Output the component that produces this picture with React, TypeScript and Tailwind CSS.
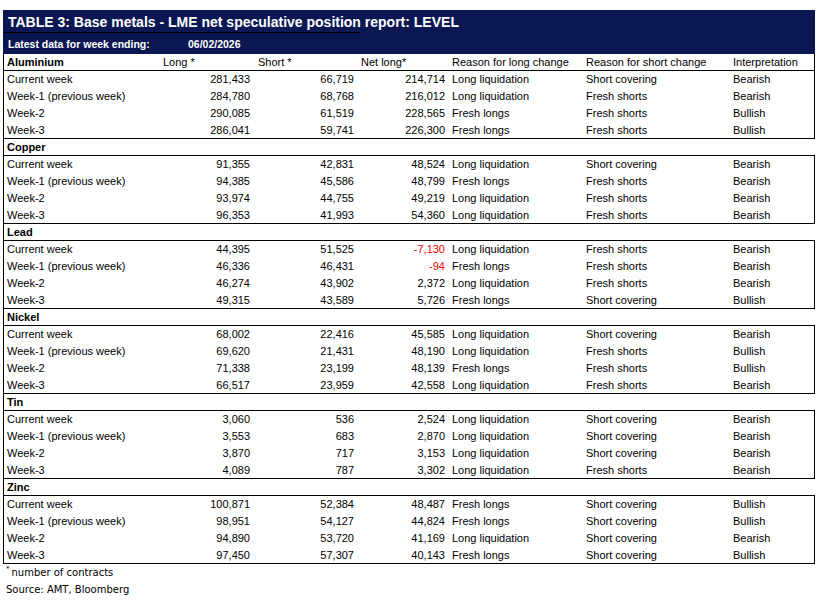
import React from 'react';

type Row = [string, string, string, string, string, string, string];

const sections: { metal: string; rows: Row[] }[] = [
  {
    metal: 'Aluminium',
    rows: [
      ['Current week', '281,433', '66,719', '214,714', 'Long liquidation', 'Short covering', 'Bearish'],
      ['Week-1 (previous week)', '284,780', '68,768', '216,012', 'Long liquidation', 'Fresh shorts', 'Bearish'],
      ['Week-2', '290,085', '61,519', '228,565', 'Fresh longs', 'Fresh shorts', 'Bullish'],
      ['Week-3', '286,041', '59,741', '226,300', 'Fresh longs', 'Fresh shorts', 'Bullish'],
    ],
  },
  {
    metal: 'Copper',
    rows: [
      ['Current week', '91,355', '42,831', '48,524', 'Long liquidation', 'Short covering', 'Bearish'],
      ['Week-1 (previous week)', '94,385', '45,586', '48,799', 'Fresh longs', 'Fresh shorts', 'Bearish'],
      ['Week-2', '93,974', '44,755', '49,219', 'Long liquidation', 'Fresh shorts', 'Bearish'],
      ['Week-3', '96,353', '41,993', '54,360', 'Long liquidation', 'Fresh shorts', 'Bearish'],
    ],
  },
  {
    metal: 'Lead',
    rows: [
      ['Current week', '44,395', '51,525', '-7,130', 'Long liquidation', 'Fresh shorts', 'Bearish'],
      ['Week-1 (previous week)', '46,336', '46,431', '-94', 'Fresh longs', 'Fresh shorts', 'Bearish'],
      ['Week-2', '46,274', '43,902', '2,372', 'Long liquidation', 'Fresh shorts', 'Bearish'],
      ['Week-3', '49,315', '43,589', '5,726', 'Fresh longs', 'Short covering', 'Bullish'],
    ],
  },
  {
    metal: 'Nickel',
    rows: [
      ['Current week', '68,002', '22,416', '45,585', 'Long liquidation', 'Short covering', 'Bearish'],
      ['Week-1 (previous week)', '69,620', '21,431', '48,190', 'Long liquidation', 'Fresh shorts', 'Bullish'],
      ['Week-2', '71,338', '23,199', '48,139', 'Fresh longs', 'Fresh shorts', 'Bullish'],
      ['Week-3', '66,517', '23,959', '42,558', 'Long liquidation', 'Fresh shorts', 'Bearish'],
    ],
  },
  {
    metal: 'Tin',
    rows: [
      ['Current week', '3,060', '536', '2,524', 'Long liquidation', 'Short covering', 'Bearish'],
      ['Week-1 (previous week)', '3,553', '683', '2,870', 'Long liquidation', 'Short covering', 'Bearish'],
      ['Week-2', '3,870', '717', '3,153', 'Long liquidation', 'Short covering', 'Bearish'],
      ['Week-3', '4,089', '787', '3,302', 'Long liquidation', 'Fresh shorts', 'Bearish'],
    ],
  },
  {
    metal: 'Zinc',
    rows: [
      ['Current week', '100,871', '52,384', '48,487', 'Fresh longs', 'Short covering', 'Bullish'],
      ['Week-1 (previous week)', '98,951', '54,127', '44,824', 'Fresh longs', 'Short covering', 'Bullish'],
      ['Week-2', '94,890', '53,720', '41,169', 'Long liquidation', 'Short covering', 'Bearish'],
      ['Week-3', '97,450', '57,307', '40,143', 'Fresh longs', 'Short covering', 'Bullish'],
    ],
  },
];

const cols = 'grid grid-cols-[146px_103px_104px_91px_134px_147px_1fr]';

function Section({ metal, rows, first }: { metal: string; rows: Row[]; first: boolean }) {
  return (
    <div>
      {/* metal name row, column headings only on the first block */}
      <div className={`${cols} h-[17px] items-center border-l border-b border-black ${first ? 'border-r' : ''}`}>
        <div className="pl-[3px] font-bold">{metal}</div>
        {first && (
          <>
            <div className="pl-[13px]">Long *</div>
            <div className="pl-[5px]">Short *</div>
            <div className="pl-[4px]">Net long*</div>
            <div className="pl-[4px]">Reason for long change</div>
            <div className="pl-[4px]">Reason for short change</div>
            <div className="pl-[4px]">Interpretation</div>
          </>
        )}
      </div>
      <div className="border-l border-r border-b border-black">
        {rows.map((r, i) => (
          <div key={i} className={`${cols} ${i === rows.length - 1 ? 'h-[16px]' : 'h-[17px]'} items-center`}>
            <div className="pl-[3px]">{r[0]}</div>
            <div className="pr-[3px] text-right">{r[1]}</div>
            <div className="pr-[3px] text-right">{r[2]}</div>
            <div className={`pr-[3px] text-right ${r[3].startsWith('-') ? 'text-[#ff0000]' : ''}`}>{r[3]}</div>
            <div className="pl-[4px]">{r[4]}</div>
            <div className="pl-[4px]">{r[5]}</div>
            <div className="pl-[4px]">{r[6]}</div>
          </div>
        ))}
      </div>
    </div>
  );
}

export default function App() {
  return (
    <div className="min-h-screen bg-white pl-[3px] pt-[10px] text-[11px] leading-none text-black [font-family:'Liberation_Sans',Arial,sans-serif]">
      <div className="w-[812px]">
        <div className="bg-[#0b1752] text-white">
          <div className="relative flex h-[24px] items-center pl-[5px] text-[14px] font-bold">
            TABLE 3: Base metals - LME net speculative position report: LEVEL
            <div className="absolute bottom-[1px] left-0 h-px w-[357px] bg-black" />
          </div>
          <div className="flex h-[20px] items-center pl-[5px] text-[10.5px] font-bold">
            <span className="w-[180px]">Latest data for week ending:</span>
            <span>06/02/2026</span>
          </div>
        </div>
        {sections.map((s, i) => (
          <Section key={s.metal} metal={s.metal} rows={s.rows} first={i === 0} />
        ))}
        <div className="pl-[3px] text-[10px] [font-family:'DejaVu_Sans',Verdana,sans-serif]">
          <div className="flex h-[17px] items-center">
            <span className="relative -top-[3px] text-[7px]">*</span>
            <span className="ml-[2px]">number of contracts</span>
          </div>
          <div className="flex h-[17px] items-center">Source: AMT, Bloomberg</div>
        </div>
      </div>
    </div>
  );
}
